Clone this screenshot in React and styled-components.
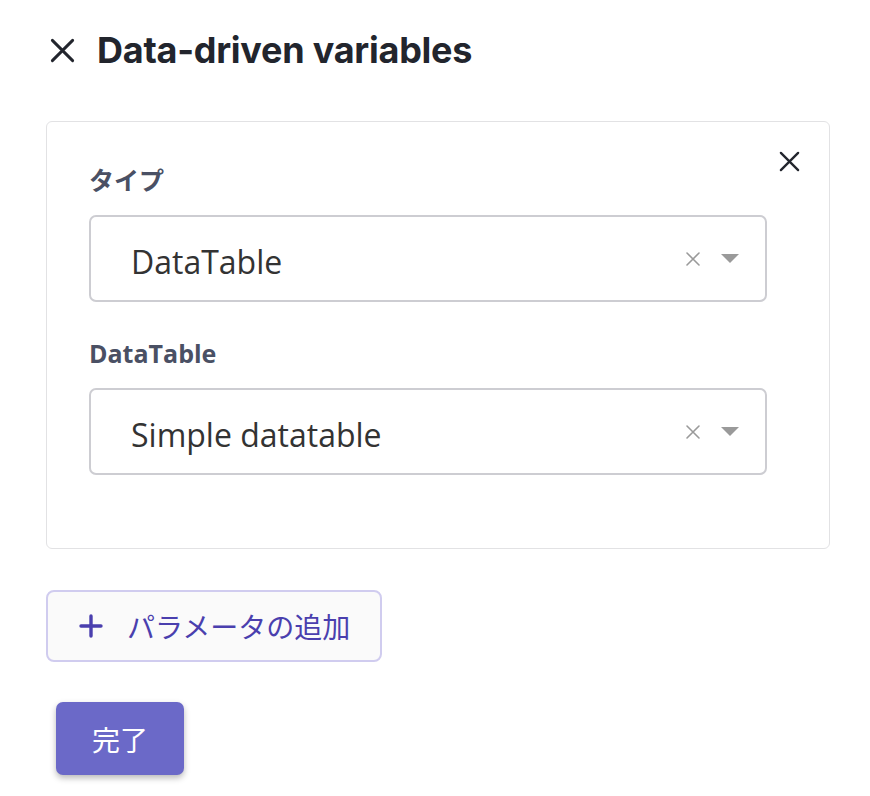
import React from 'react'
import styled, { createGlobalStyle } from 'styled-components'

const GlobalStyle = createGlobalStyle`
  body {
    margin: 0;
    background: #fff;
    font-family: "Open Sans", "Noto Sans CJK JP", sans-serif;
  }
`

const Page = styled.div`
  padding: 24px 40px 20px 46px;
  width: 784px;
`

const Header = styled.div`
  display: flex;
  align-items: center;
  gap: 21px;
  height: 52px;
  padding-left: 3px;
`

const Title = styled.h1`
  margin: 0;
  font-family: "Inter", "Noto Sans CJK JP", sans-serif;
  font-weight: 700;
  font-size: 36px;
  letter-spacing: -0.25px;
  color: #22252d;
`

const Card = styled.div`
  position: relative;
  margin-top: 45px;
  border: 1px solid #e2e2e4;
  border-radius: 6px;
  padding: 41px 62px 73px 42px;
`

const CloseBtn = styled.button`
  position: absolute;
  top: 28px;
  right: 28px;
  padding: 0;
  border: 0;
  background: none;
  display: flex;
  cursor: pointer;
`

const Label = styled.div`
  font-weight: 700;
  font-size: 25px;
  line-height: 34px;
  color: #4a5064;
  margin-top: ${p => p.$first ? '0' : '34px'};
`

const Select = styled.div`
  margin-top: 18px;
  height: 87px;
  box-sizing: border-box;
  border: 2px solid #cdcdd2;
  border-radius: 7px;
  display: flex;
  align-items: center;
  padding: 0 26px 0 40px;
`

const Value = styled.span`
  flex: 1;
  padding-top: 5px;
  font-size: 32px;
  color: #333;
`

const Icons = styled.div`
  display: flex;
  align-items: center;
  gap: 20px;
`

const AddButton = styled.button`
  margin-top: 41px;
  display: flex;
  align-items: center;
  gap: 24px;
  height: 72px;
  padding: 0 30px 0 31px;
  box-sizing: border-box;
  background: #fafafa;
  border: 2px solid #d0ccef;
  border-radius: 8px;
  color: #4a3fae;
  font-family: "Noto Sans CJK JP", sans-serif;
  font-size: 28px;
  cursor: pointer;
`

const DoneButton = styled.button`
  margin: 40px 0 0 10px;
  width: 128px;
  height: 73px;
  border: 0;
  border-radius: 7px;
  background: #6b69c8;
  color: #fff;
  font-family: "Noto Sans CJK JP", sans-serif;
  font-size: 28px;
  box-shadow: 0 3px 6px rgba(0, 0, 0, 0.28);
  cursor: pointer;
`

const XIcon = ({ size, color, stroke }) => (
  <svg width={size} height={size} viewBox="0 0 24 24" fill="none" stroke={color} strokeWidth={stroke} strokeLinecap="round">
    <path d="M3 3L21 21M21 3L3 21" />
  </svg>
)

const Caret = () => (
  <svg width="18" height="9" viewBox="0 0 18 9"><path d="M0 0H18L9 9Z" fill="#9a9a9a" /></svg>
)

const SelectBox = ({ value }) => (
  <Select>
    <Value>{value}</Value>
    <Icons>
      <XIcon size={16} color="#9a9a9a" stroke={2.4} />
      <Caret />
    </Icons>
  </Select>
)

export default function App() {
  return (
    <>
      <GlobalStyle />
      <Page>
        <Header>
          <XIcon size={27} color="#22252d" stroke={2.6} />
          <Title>Data-driven variables</Title>
        </Header>
        <Card>
          <CloseBtn><XIcon size={23} color="#22252d" stroke={2.4} /></CloseBtn>
          <Label $first>タイプ</Label>
          <SelectBox value="DataTable" />
          <Label>DataTable</Label>
          <SelectBox value="Simple datatable" />
        </Card>
        <AddButton>
          <svg width="24" height="24" viewBox="0 0 24 24" stroke="#4a3fae" strokeWidth="3.4" strokeLinecap="round">
            <path d="M12 2V22M2 12H22" />
          </svg>
          パラメータの追加
        </AddButton>
        <DoneButton>完了</DoneButton>
      </Page>
    </>
  )
}
